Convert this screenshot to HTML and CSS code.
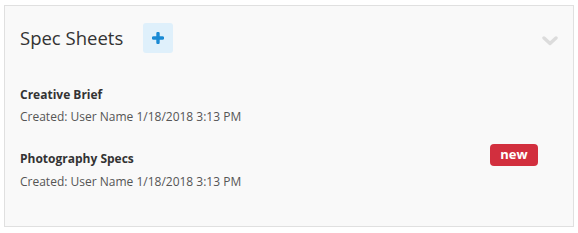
FILE: index.html
```html
<!DOCTYPE html>
<html>
<head>
<meta charset="utf-8">
<link rel="stylesheet" href="styles.css">
</head>
<body>
<div class="card">
  <div class="header">
    <h2 class="title">Spec Sheets</h2>
    <button class="add-btn" aria-label="Add">
      <svg width="12" height="12" viewBox="0 0 12 12"><path d="M6 1.5v9M1.5 6h9" stroke="#1a8ad4" stroke-width="3.4" stroke-linecap="round"/></svg>
    </button>
    <span class="chevron">
      <svg width="16" height="10" viewBox="0 0 16 10"><path d="M2 2l6 5.5L14 2" fill="none" stroke="#dcdcdc" stroke-width="3.4" stroke-linecap="round" stroke-linejoin="round"/></svg>
    </span>
  </div>
  <div class="list">
    <div class="item">
      <div class="item-main">
        <div class="item-name">Creative Brief</div>
        <div class="item-meta">Created: User Name 1/18/2018 3:13 PM</div>
      </div>
    </div>
    <div class="item">
      <div class="item-main">
        <div class="item-name">Photography Specs</div>
        <div class="item-meta">Created: User Name 1/18/2018 3:13 PM</div>
      </div>
      <span class="badge">new</span>
    </div>
  </div>
</div>
</body>
</html>
```
FILE: styles.css
```css
html, body {
  margin: 0;
  padding: 0;
  background: #ffffff;
}
body {
  padding: 5px 4px 0 4px;
  font-family: "Open Sans", "Noto Sans", sans-serif;
}
.card {
  width: 570px;
  height: 222px;
  box-sizing: border-box;
  border: 1px solid #e0e0e0;
  background: #f9f9f9;
  padding: 17px 15px 0 15px;
}
.header {
  display: flex;
  align-items: center;
  height: 30px;
}
.title {
  margin: 0;
  font-size: 18.5px;
  font-weight: 400;
  color: #333333;
  line-height: 30px;
}
.add-btn {
  margin-left: 20px;
  width: 30px;
  height: 30px;
  border: none;
  border-radius: 3px;
  background: #dff0fb;
  padding: 0;
  display: flex;
  align-items: center;
  justify-content: center;
}
.chevron {
  margin-left: auto;
  margin-right: 0;
  display: flex;
  margin-top: 6px;
}
.list {
  margin-top: 34px;
  display: flex;
  flex-direction: column;
  gap: 26px;
}
.item {
  display: flex;
  align-items: flex-start;
  justify-content: space-between;
}
.item-name {
  font-size: 12px;
  font-weight: 700;
  color: #333333;
  line-height: 16px;
}
.item-meta {
  margin-top: 6px;
  font-size: 12px;
  color: #555555;
  line-height: 16px;
}
.item + .item .item-meta {
  margin-top: 7px;
}
.badge {
  margin-top: -7px;
  margin-right: 20px;
  width: 48px;
  height: 22px;
  border-radius: 4px;
  background: #d22f3e;
  color: #ffffff;
  font-size: 13px;
  font-weight: 700;
  line-height: 21px;
  text-align: center;
}
```
